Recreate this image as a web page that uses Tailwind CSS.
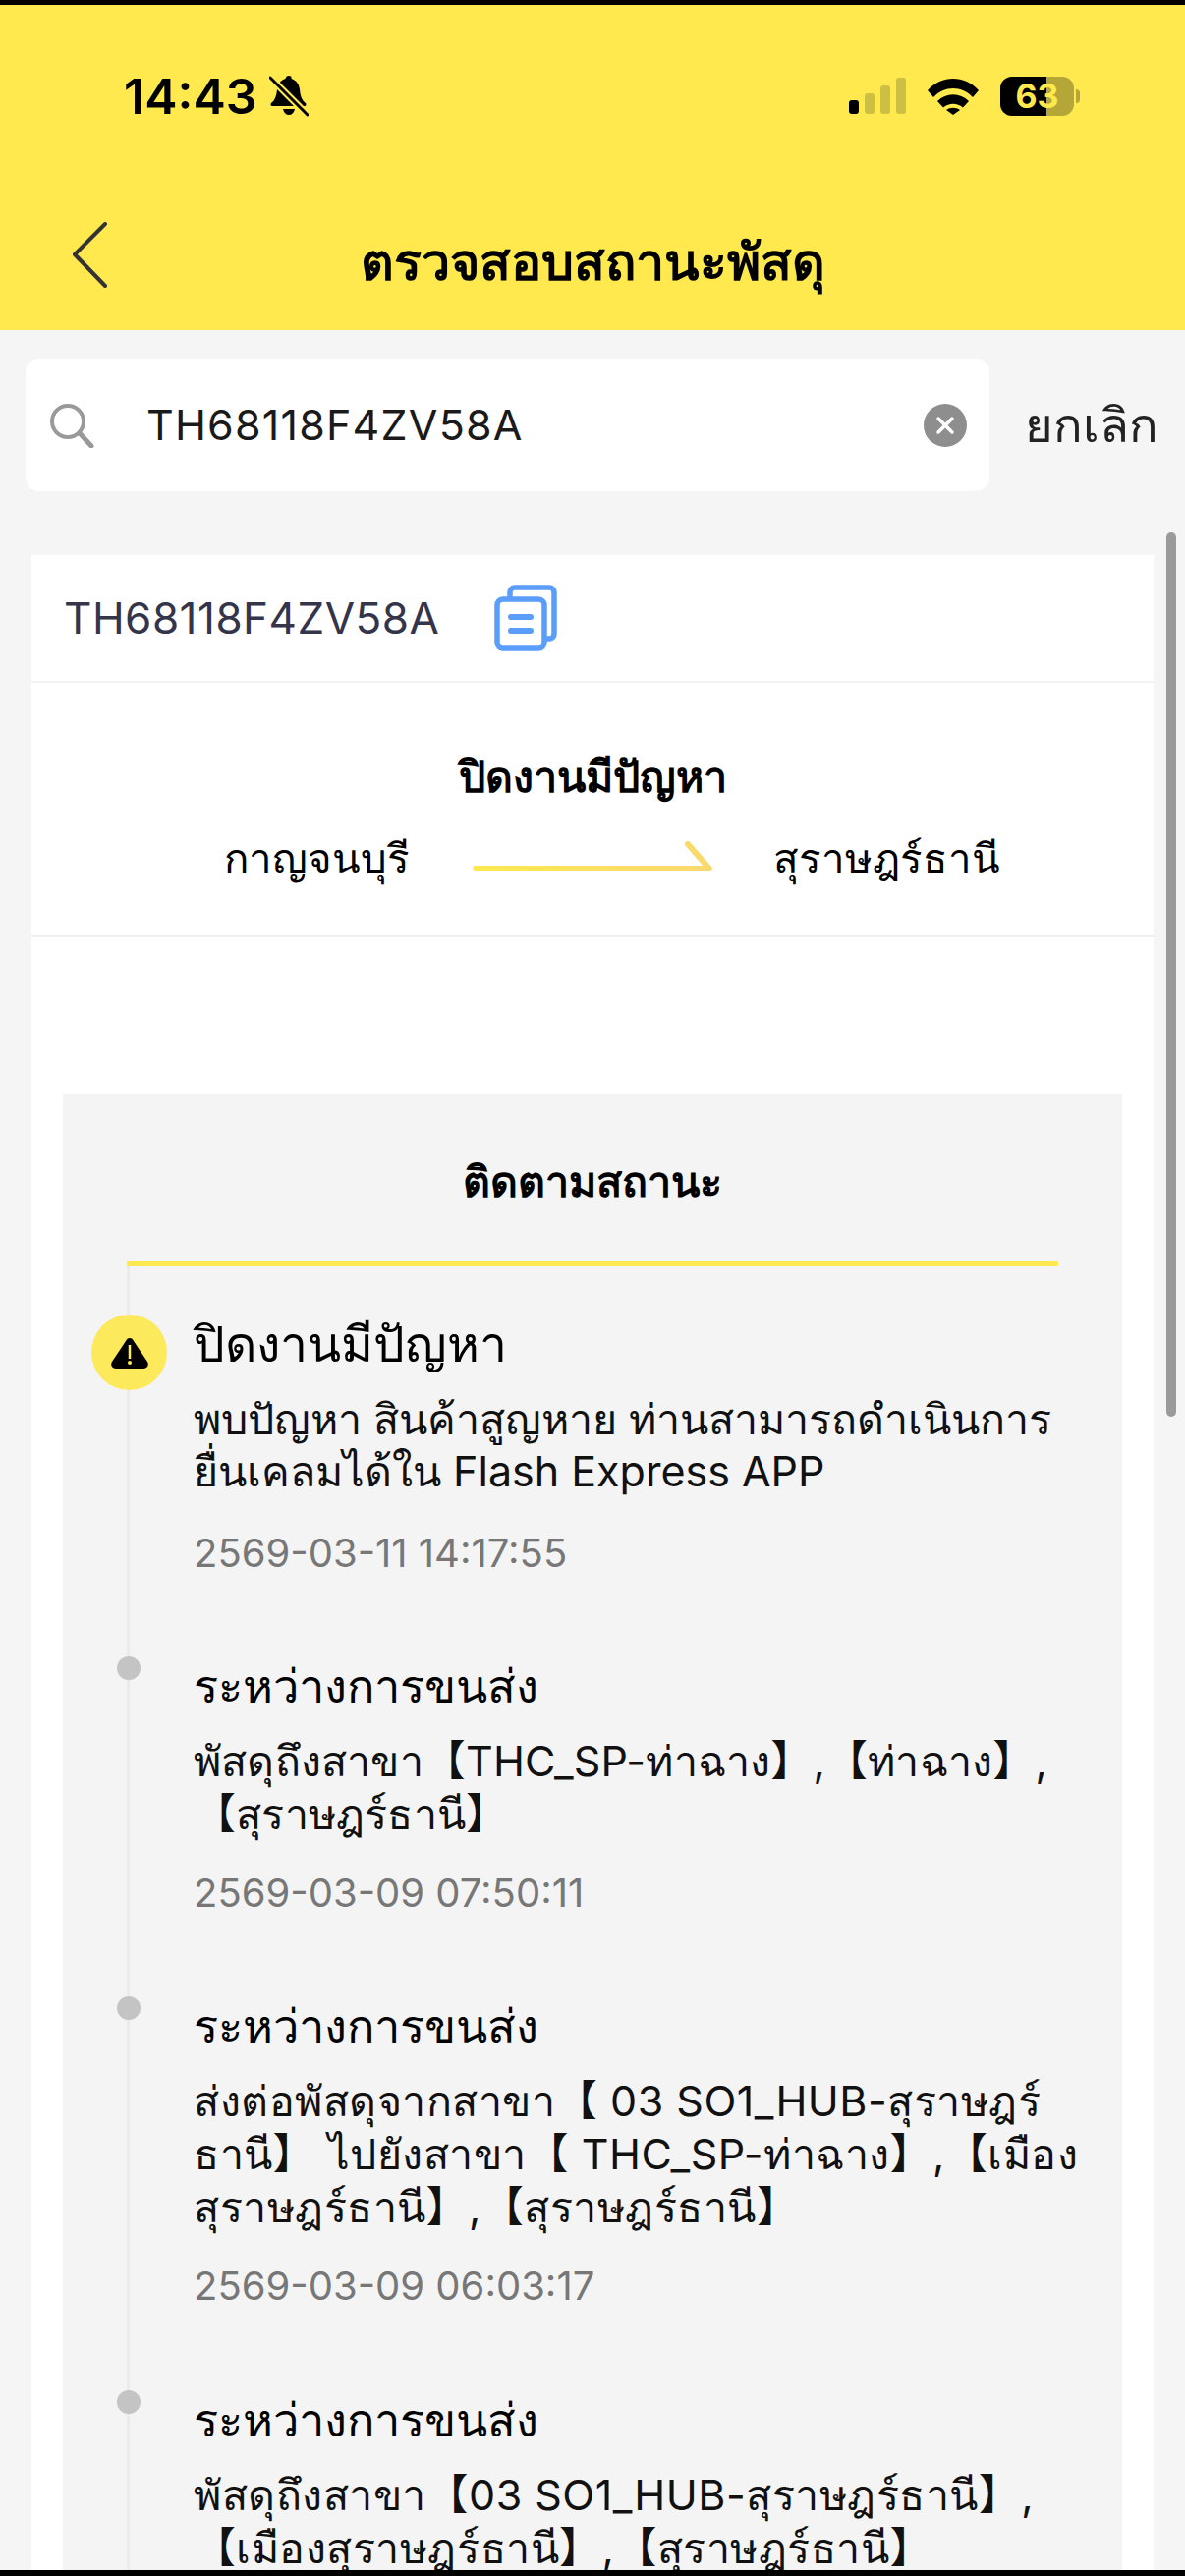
<!DOCTYPE html>
<html lang="th">
<head>
    <meta charset="UTF-8">
    <meta name="viewport" content="width=device-width, initial-scale=1.0">
    <title>ตรวจสอบสถานะพัสดุ</title>
    <script src="https://cdn.jsdelivr.net/npm/@tailwindcss/browser@4"></script>
</head>
<body class="bg-[#f5f5f5]">
<div class="relative w-[1206px] h-[2622px] overflow-hidden bg-[#f5f5f5] font-['Inter','Noto_Sans','Noto_Sans_CJK_SC',sans-serif] text-black">

    <!-- header -->
    <div class="border-t-[5px] border-black bg-[#ffe94e] h-[336px]">
        <div class="flex items-center justify-between pl-[126px] pr-[107px] pt-[58px] h-[128px]">
            <div class="flex items-center gap-[12px]">
                <span class="text-[50px] font-semibold leading-none">14:43</span>
                <svg width="40" height="44" viewBox="0 0 40 44">
                    <path d="M20 1c-2 0-3 1-3.500 3-5 1.500-8 6-8.500 11-.5 6-2 11-6 14-1 1-.5 3 1 3h33c1.500 0 2-2 1-3-4-3-5.500-8-6-14-.5-5-3.500-9.500-8.500-11C23 2 22 1 20 1z" fill="#000"/>
                    <path d="M14 35c1 4 3 6 6 6s5-2 6-6z" fill="#000"/>
                    <path d="M1 3l38 38" stroke="#ffe94e" stroke-width="7"/>
                    <path d="M1 3l38 38" stroke="#000" stroke-width="3" stroke-linecap="round"/>
                </svg>
            </div>
            <div class="flex items-center gap-[22px]">
                <svg width="58" height="38" viewBox="0 0 58 38">
                    <rect x="0" y="23" width="10" height="14" rx="3" fill="#000"/>
                    <rect x="16" y="16" width="10" height="21" rx="3" fill="#cdbf41"/>
                    <rect x="32" y="8" width="10" height="29" rx="3" fill="#cdbf41"/>
                    <rect x="48" y="0" width="10" height="37" rx="3" fill="#cdbf41"/>
                </svg>
                <svg width="52" height="38" viewBox="0 0 52 38">
                    <path d="M0 13C14 -3 38 -3 52 13l-6 7C35 8 17 8 6 20z" fill="#000"/>
                    <path d="M10 24c9-9 23-9 32 0l-6 6.500c-6-5-14-5-20 0z" fill="#000"/>
                    <path d="M19 33c4-3 10-3 14 0l-7 5z" fill="#000"/>
                </svg>
                <div class="flex items-center gap-[2px]">
                    <div class="relative flex items-center justify-center w-[75px] h-[40px] rounded-[12px] overflow-hidden bg-[#b4a637]">
                        <div class="absolute left-0 top-0 h-full w-[47px] bg-black"></div>
                        <span class="relative text-[34px] font-bold leading-none text-[#ffe94e]">63</span>
                    </div>
                    <div class="w-[4px] h-[14px] rounded-r-full bg-[#b4a637]"></div>
                </div>
            </div>
        </div>
        <div class="relative flex items-center justify-center h-[100px] mt-[96px]">
            <svg class="absolute left-[72px] top-[-3px]" width="38" height="68" viewBox="0 0 38 68">
                <path d="M35 2L4 33l31 32" fill="none" stroke="#333" stroke-width="4" stroke-linecap="round" stroke-linejoin="round"/>
            </svg>
            <span class="text-[52px] font-bold leading-none relative top-[-12px]">ตรวจสอบสถานะพัสดุ</span>
        </div>
    </div>

    <!-- search -->
    <div class="flex items-center pl-[26px] pt-[29px]">
        <div class="flex items-center w-[981px] h-[135px] rounded-[14px] bg-white pl-[24px] pr-[23px]">
            <svg width="46" height="46" viewBox="0 0 46 46">
                <circle cx="19" cy="19" r="16" fill="none" stroke="#999" stroke-width="4"/>
                <path d="M31 31l12 13" stroke="#999" stroke-width="5" stroke-linecap="round"/>
            </svg>
            <span class="ml-[53px] text-[43px] tracking-[1.2px] leading-none text-[#1a1a1a]">TH68118F4ZV58A</span>
            <div class="ml-auto flex items-center justify-center w-[44px] h-[44px] rounded-full bg-[#8e8e8e]">
                <svg width="20" height="20" viewBox="0 0 20 20">
                    <path d="M3 3l14 14M17 3L3 17" stroke="#fff" stroke-width="3.500" stroke-linecap="round"/>
                </svg>
            </div>
        </div>
        <span class="ml-[36px] text-[49px] leading-none text-[#222]">ยกเลิก</span>
    </div>

    <!-- card -->
    <div class="mt-[65px] ml-[32px] w-[1142px] bg-white">
        <div class="flex items-center h-[130px] pl-[33px] border-b-2 border-[#f3f3f3]">
            <span class="text-[44px] tracking-[0.5px] leading-none text-[#34344a]">TH68118F4ZV58A</span>
            <svg class="ml-[56px]" width="64" height="68" viewBox="0 0 64 68">
                <path d="M16 14V8c0-3 2-5 5-5h35c3 0 5 2 5 5v42c0 3-2 5-5 5h-5" fill="none" stroke="#5b9dfb" stroke-width="5.500"/>
                <rect x="3" y="15" width="48" height="50" rx="6" fill="#fff" stroke="#5b9dfb" stroke-width="5.500"/>
                <path d="M17 33h20M17 47h20" stroke="#5b9dfb" stroke-width="6" stroke-linecap="round"/>
            </svg>
        </div>
        <div class="flex flex-col items-center h-[259px] border-b-2 border-[#efefef] pt-[67px]">
            <span class="text-[43px] font-semibold leading-[56px]">ปิดงานมีปัญหา</span>
            <div class="relative w-full h-[70px] mt-[4px]">
                <span class="absolute left-[196px] top-[24px] text-[42px] leading-[56px]">กาญจนบุรี</span>
                <svg class="absolute left-[449px] top-[33px]" width="246" height="36" viewBox="0 0 246 36">
                    <defs>
                        <linearGradient id="arrowFade" x1="0" y1="0" x2="1" y2="0">
                            <stop offset="0" stop-color="#ffe94e"/>
                            <stop offset="1" stop-color="#f9d96f"/>
                        </linearGradient>
                    </defs>
                    <path d="M3 29h238l-22-25" fill="none" stroke="url(#arrowFade)" stroke-width="6" stroke-linecap="round" stroke-linejoin="round"/>
                </svg>
                <span class="absolute left-[755px] top-[24px] text-[42px] leading-[56px]">สุราษฎร์ธานี</span>
            </div>
        </div>

        <!-- tracking -->
        <div class="mx-[32px] mt-[160px] bg-[#f4f4f4] pt-[60px]">
            <div class="text-center text-[43px] font-semibold leading-[56px]">ติดตามสถานะ</div>
            <div class="ml-[65px] mr-[65px] mt-[54px] border-l-[3px] border-[#ebebeb]">
                <div class="-ml-[3px] h-[5px] bg-[#ffe94e]"></div>

                <div class="relative pl-[65px] pt-[49px] h-[397px]">
                    <div class="absolute left-[-39px] top-[49px] flex items-center justify-center w-[77px] h-[77px] rounded-full bg-[#fde95c]">
                        <svg width="40" height="34" viewBox="0 0 40 34">
                            <path d="M20 2c-2 0-3 1-4 3L2 26c-2 3 0 7 4 7h28c4 0 6-4 4-7L24 5c-1-2-2-3-4-3z" fill="#000"/>
                            <path d="M20 9v14" stroke="#fde95c" stroke-width="2.500"/>
                            <circle cx="20" cy="27" r="2" fill="#fde95c"/>
                        </svg>
                    </div>
                    <div class="text-[50px] leading-[60px]">ปิดงานมีปัญหา</div>
                    <div class="mt-[20px] text-[43px] leading-[53px] text-[#111] whitespace-nowrap">พบปัญหา สินค้าสูญหาย ท่านสามารถดำเนินการ<br>ยื่นเคลมได้ใน Flash Express APP</div>
                    <div class="mt-[33px] text-[40px] leading-[48px] text-[#777]">2569-03-11 14:17:55</div>
                </div>

                <div class="relative pl-[65px] h-[346px]">
                    <div class="absolute left-[-13px] top-[0px] w-[24px] h-[24px] rounded-full bg-[#c4c4c4]"></div>
                    <div class="text-[47px] leading-[60px]">ระหว่างการขนส่ง</div>
                    <div class="mt-[19px] text-[43px] leading-[54px] tracking-[0.2px] text-[#111] whitespace-nowrap">พัสดุถึงสาขา【THC_SP-ท่าฉาง】,【ท่าฉาง】,<br>【สุราษฎร์ธานี】</div>
                    <div class="mt-[30px] text-[40px] leading-[48px] text-[#777]">2569-03-09 07:50:11</div>
                </div>

                <div class="relative pl-[65px] h-[401px]">
                    <div class="absolute left-[-13px] top-[0px] w-[24px] h-[24px] rounded-full bg-[#c4c4c4]"></div>
                    <div class="text-[47px] leading-[60px]">ระหว่างการขนส่ง</div>
                    <div class="mt-[19px] text-[43px] leading-[54px] tracking-[0.5px] text-[#111] whitespace-nowrap">ส่งต่อพัสดุจากสาขา【 03 SO1_HUB-สุราษฎร์<br>ธานี】 ไปยังสาขา【 THC_SP-ท่าฉาง】,【เมือง<br>สุราษฎร์ธานี】,【สุราษฎร์ธานี】</div>
                    <div class="mt-[30px] text-[40px] leading-[48px] text-[#777]">2569-03-09 06:03:17</div>
                </div>

                <div class="relative pl-[65px] h-[300px]">
                    <div class="absolute left-[-13px] top-[0px] w-[24px] h-[24px] rounded-full bg-[#c4c4c4]"></div>
                    <div class="text-[47px] leading-[60px]">ระหว่างการขนส่ง</div>
                    <div class="mt-[19px] text-[43px] leading-[54px] tracking-[0.5px] text-[#111] whitespace-nowrap">พัสดุถึงสาขา【03 SO1_HUB-สุราษฎร์ธานี】,<br>【เมืองสุราษฎร์ธานี】,【สุราษฎร์ธานี】</div>
                </div>
            </div>
        </div>
    </div>

    <!-- scrollbar and bottom edge -->
    <div class="absolute left-[1187px] top-[542px] w-[10px] h-[900px] rounded-full bg-[#9a9a9a]"></div>
    <div class="absolute left-0 bottom-0 w-full h-[6px] bg-black"></div>
</div>
</body>
</html>
